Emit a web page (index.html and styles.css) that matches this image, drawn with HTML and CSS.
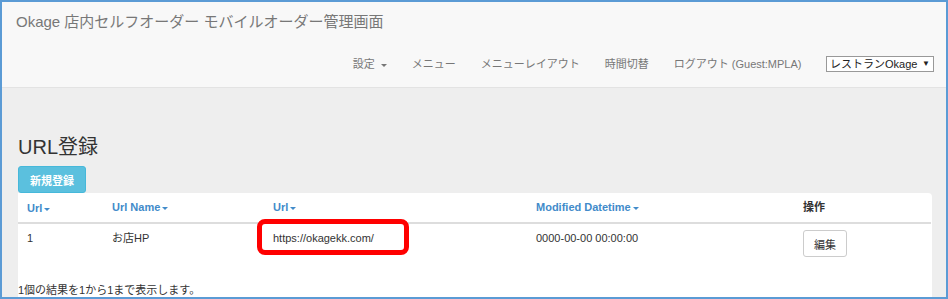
FILE: index.html
```html
<!DOCTYPE html>
<html lang="ja">
<head>
    <meta charset="UTF-8">
    <meta name="viewport" content="width=device-width, initial-scale=1.0">
    <title>URL登録</title>
    <link rel="stylesheet" href="styles.css">
</head>
<body>
    <div class="frame">
        <nav class="navbar">
            <div class="brand">Okage 店内セルフオーダー モバイルオーダー管理画面</div>
            <ul class="nav-links">
                <li>設定 <span class="caret"></span></li>
                <li>メニュー</li>
                <li>メニューレイアウト</li>
                <li>時間切替</li>
                <li>ログアウト (Guest:MPLA)</li>
                <li class="shop-select">
                    <span class="shop-name">レストランOkage</span>
                    <span class="shop-arrow">▼</span>
                </li>
            </ul>
        </nav>

        <main class="content">
            <h3 class="page-title">URL登録</h3>
            <button class="btn-new">新規登録</button>

            <div class="panel">
                <table class="url-table">
                    <colgroup>
                        <col style="width: 85px">
                        <col style="width: 161px">
                        <col style="width: 263px">
                        <col style="width: 267px">
                        <col>
                    </colgroup>
                    <thead>
                        <tr>
                            <th><a class="sort">Url<span class="caret"></span></a></th>
                            <th><a class="sort">Url Name<span class="caret"></span></a></th>
                            <th><a class="sort">Url<span class="caret"></span></a></th>
                            <th><a class="sort">Modified Datetime<span class="caret"></span></a></th>
                            <th>操作</th>
                        </tr>
                    </thead>
                    <tbody>
                        <tr>
                            <td>1</td>
                            <td>お店HP</td>
                            <td class="url-cell">
                                https://okagekk.com/
                                <span class="highlight"></span>
                            </td>
                            <td>0000-00-00 00:00:00</td>
                            <td><button class="btn-edit">編集</button></td>
                        </tr>
                    </tbody>
                </table>
                <p class="summary">1個の結果を1から1まで表示します。</p>
            </div>
        </main>
    </div>
</body>
</html>
```

FILE: styles.css
```css
* {
    margin: 0;
    padding: 0;
    box-sizing: border-box;
}

body {
    font-family: "Liberation Sans", "Noto Sans CJK JP", sans-serif;
    font-size: 11px;
    line-height: 16px;
    color: #333;
    background: #fff;
}

.frame {
    width: 948px;
    height: 299px;
    border: 2px solid #5b9bd5;
    background-color: #eeeeee;
    overflow: hidden;
}

/* ナビゲーション */
.navbar {
    height: 86px;
    background-color: #f8f8f8;
    border-bottom: 1px solid #e3e3e3;
    padding: 10px 0 0 14px;
}

.brand {
    font-size: 15px;
    line-height: 20px;
    color: #777;
}

.nav-links {
    list-style: none;
    display: flex;
    justify-content: flex-end;
    align-items: center;
    margin-top: 24px;
    padding-right: 12px;
    color: #777;
    white-space: nowrap;
}

.nav-links li {
    padding: 0 12.5px;
}

.caret {
    display: inline-block;
    width: 0;
    height: 0;
    margin-left: 3px;
    vertical-align: middle;
    border-top: 3px solid;
    border-left: 3px solid transparent;
    border-right: 3px solid transparent;
}

.nav-links .shop-select {
    display: flex;
    align-items: center;
    justify-content: space-between;
    width: 108px;
    height: 16px;
    margin-left: 12px;
    padding: 0 3px 0 3px;
    border: 1px solid #999;
    background: #fff;
    color: #222;
    font-size: 11px;
    line-height: 14px;
    overflow: hidden;
}

.shop-arrow {
    font-size: 8px;
}

/* 本文 */
.content {
    padding: 0 14px 0 16px;
}

.page-title {
    margin-top: 47px;
    font-size: 20px;
    line-height: 24px;
    font-weight: normal;
    color: #333;
}

.btn-new {
    margin-top: 7px;
    height: 27px;
    padding: 0 11px;
    background-color: #5bc0de;
    border: 1px solid #46b8da;
    border-radius: 3px;
    color: #fff;
    font-family: inherit;
    font-size: 11px;
    font-weight: bold;
}

.panel {
    background-color: #fff;
    border-radius: 0 4px 0 0;
    height: 120px;
}

.url-table {
    width: 913px;
    table-layout: fixed;
    border-collapse: collapse;
}

.url-table th,
.url-table td {
    padding: 6px 9px;
    text-align: left;
    vertical-align: top;
}

.url-table th {
    border-bottom: 2px solid #ddd;
    font-weight: bold;
}

.url-table thead th:first-child {
    padding-top: 7px;
}

.sort {
    color: #428bca;
}

.sort .caret {
    margin-left: 2px;
}

.url-cell {
    position: relative;
}

.highlight {
    position: absolute;
    left: -7px;
    top: -5px;
    width: 152px;
    height: 36px;
    border: 5px solid #ff0000;
    border-radius: 8px;
}

.btn-edit {
    height: 27px;
    padding: 0 10px;
    background: #fff;
    border: 1px solid #ccc;
    border-radius: 3px;
    color: #333;
    font-family: inherit;
    font-size: 11px;
}

.summary {
    margin-top: 19px;
}
```
